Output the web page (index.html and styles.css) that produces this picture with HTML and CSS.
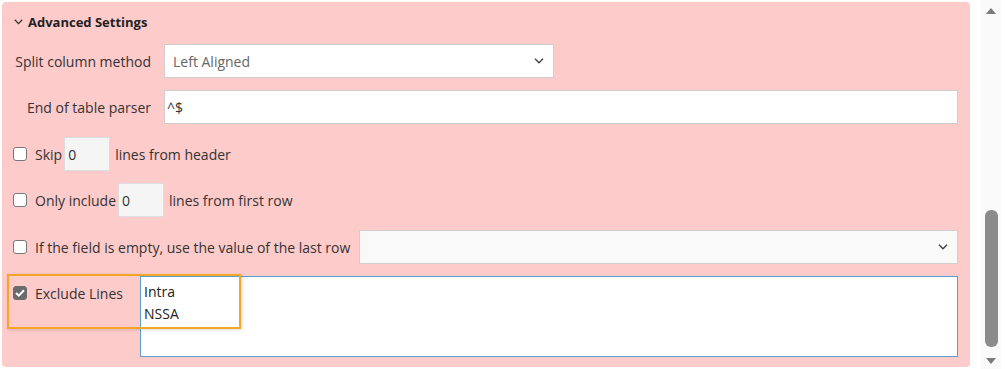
FILE: index.html
```html
<!DOCTYPE html>
<html lang="en">
<head>
  <meta charset="UTF-8" />
  <title>Advanced Settings</title>
  <link rel="stylesheet" href="styles.css">
</head>
<body>
  <div class="frame">
    <section class="panel">
      <div class="panel-head">
        <svg class="chev" width="9" height="6" viewBox="0 0 9 6"><path d="M0.8 0.8 L4.5 4.6 L8.2 0.8" fill="none" stroke="#333" stroke-width="1.3"/></svg>
        <span>Advanced Settings</span>
      </div>

      <div class="row">
        <label class="lbl">Split column method</label>
        <div class="select sel-short">
          <span class="muted">Left Aligned</span>
          <svg width="10" height="6" viewBox="0 0 10 6"><path d="M1 0.8 L5 4.8 L9 0.8" fill="none" stroke="#444" stroke-width="1.4"/></svg>
        </div>
      </div>

      <div class="row gap-lg">
        <label class="lbl">End of table parser</label>
        <div class="input grow">^$</div>
      </div>

      <div class="row">
        <span class="check"></span>
        <span class="txt">Skip</span>
        <div class="num">0</div>
        <span class="txt">lines from header</span>
      </div>

      <div class="row gap-lg">
        <span class="check"></span>
        <span class="txt">Only include</span>
        <div class="num">0</div>
        <span class="txt">lines from first row</span>
      </div>

      <div class="row">
        <span class="check"></span>
        <span class="txt wide">If the field is empty, use the value of the last row</span>
        <div class="select grow soft">
          <span></span>
          <svg width="10" height="6" viewBox="0 0 10 6"><path d="M1 0.8 L5 4.8 L9 0.8" fill="none" stroke="#444" stroke-width="1.4"/></svg>
        </div>
      </div>

      <div class="row row-top">
        <div class="exclude">
          <span class="check on">
            <svg width="10" height="8" viewBox="0 0 10 8"><path d="M1 4 L3.8 6.6 L9 1.2" fill="none" stroke="#fff" stroke-width="2"/></svg>
          </span>
          <span class="txt">Exclude Lines</span>
        </div>
        <div class="area grow">Intra<br>NSSA</div>
      </div>

      <div class="highlight"></div>
    </section>

    <div class="scrollbar">
      <span class="arrow up"></span>
      <span class="thumb"></span>
      <span class="arrow down"></span>
    </div>
  </div>
</body>
</html>
```

FILE: styles.css
```css
body {
  margin: 0;
  background: #fff;
  font-family: 'Open Sans', 'Segoe UI', sans-serif;
  font-size: 14px;
  color: #333;
}

.frame {
  display: flex;
  height: 369px;
}

.panel {
  position: relative;
  box-sizing: border-box;
  width: 968px;
  height: 365px;
  margin: 2px 0 0 2px;
  padding: 10px 12px 12px 11px;
  background: #fecbcb;
  border-radius: 4px;
}

.panel-head {
  display: flex;
  align-items: center;
  gap: 5px;
  height: 20px;
  margin-bottom: 12px;
  font-size: 13px;
  font-weight: 700;
  color: #222;
}

.chev {
  margin-left: 1px;
}

.row {
  display: flex;
  align-items: center;
  margin-bottom: 12px;
}
.row.gap-lg {
  margin-bottom: 13px;
}
.row-top {
  align-items: flex-start;
  margin-bottom: 0;
}

.lbl {
  width: 138px;
  margin-right: 13px;
  text-align: right;
}

.select, .input, .num {
  box-sizing: border-box;
  height: 34px;
  border: 1px solid #cfcfcf;
  background: #fff;
}

.select {
  display: flex;
  align-items: center;
  justify-content: space-between;
  padding: 0 9px 0 8px;
}
.sel-short {
  width: 390px;
}
.soft {
  background: #f9f9f9;
}
.muted {
  color: #666;
}

.input {
  display: flex;
  align-items: center;
  padding-left: 2px;
}

.grow {
  flex: 1;
}

.check {
  box-sizing: border-box;
  width: 14px;
  height: 14px;
  margin-right: 8px;
  border: 1px solid #777;
  border-radius: 3px;
  background: #fff;
  display: flex;
  align-items: center;
  justify-content: center;
}
.check.on {
  background: #6b6b6b;
  border-color: #6b6b6b;
}

.num {
  display: flex;
  align-items: center;
  width: 46px;
  padding-left: 3px;
  margin: 0 5px 0 2px;
  background: #f5f5f5;
  border-color: #ddd;
}

.wide {
  margin-right: 9px;
}

.exclude {
  display: flex;
  align-items: center;
  width: 127px;
  height: 14px;
  margin-top: 10px;
}

.area {
  box-sizing: border-box;
  height: 81px;
  padding: 4px 3px;
  line-height: 22px;
  background: #fff;
  border: 1px solid #5b9fd2;
  color: #222;
}

.highlight {
  position: absolute;
  left: 5px;
  top: 272px;
  width: 230px;
  height: 51px;
  border: 2px solid #f6a524;
  box-shadow: 1px 1px 3px rgba(0, 0, 0, 0.15);
}

.scrollbar {
  display: flex;
  flex-direction: column;
  align-items: center;
  width: 20px;
  margin-left: 11px;
  background: #fafafa;
}

.arrow {
  width: 0;
  height: 0;
  border-left: 5px solid transparent;
  border-right: 5px solid transparent;
}
.arrow.up {
  margin-top: 8px;
  border-bottom: 6px solid #7a7a7a;
}
.arrow.down {
  margin-top: 11px;
  border-top: 6px solid #7a7a7a;
}

.thumb {
  width: 13px;
  height: 137px;
  margin-top: 196px;
  border-radius: 6px;
  background: #8b8b8b;
}
```
